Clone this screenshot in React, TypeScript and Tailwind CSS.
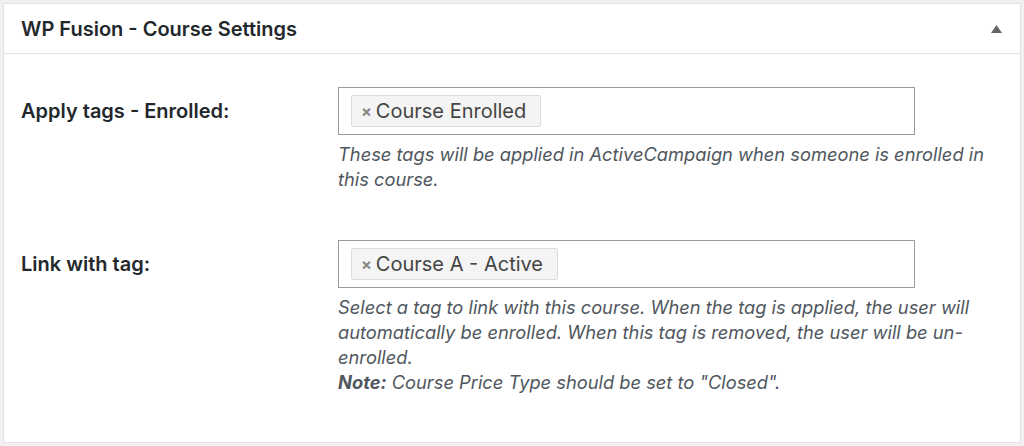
const font = { fontFamily: 'Inter, "Liberation Sans", Arial, sans-serif' };

function TagField({ tag }: { tag: string }) {
  return (
    <div className="flex h-[48px] w-[577px] items-center border border-[#9a9a9a] bg-white px-[12px]">
      <span className="flex h-[32px] items-center gap-[4px] rounded-[2px] border border-[#dcdcdc] bg-[#f4f4f4] pl-[9px] pr-[14px] text-[20px] text-[#444]">
        <span className="text-[16px] font-bold text-[#888]">×</span>
        {tag}
      </span>
    </div>
  );
}

function Row({
  label,
  tag,
  children,
}: {
  label: string;
  tag: string;
  children: React.ReactNode;
}) {
  return (
    <div className="flex">
      <div className="flex h-[48px] w-[317px] shrink-0 items-center text-[20px] font-semibold text-[#23282d]">
        {label}
      </div>
      <div>
        <TagField tag={tag} />
        <p className="mt-[7px] w-[670px] text-[18.3px] italic leading-[24.7px] text-[#50575e]">
          {children}
        </p>
      </div>
    </div>
  );
}

export default function App() {
  return (
    <div className="h-[446px] w-[1024px] bg-[#f1f1f1] p-[3px]" style={font}>
      <div className="h-[440px] border border-[#e2e4e7] bg-white">
        <div className="flex h-[50px] items-center justify-between border-b border-[#e2e4e7] pl-[17px] pr-[18px]">
          <h2 className="text-[20px] font-semibold text-[#23282d]">WP Fusion - Course Settings</h2>
          <svg width="11" height="8" viewBox="0 0 11 8">
            <path d="M5.5 0 L11 8 L0 8 Z" fill="#666" />
          </svg>
        </div>
        <div className="flex flex-col gap-[49px] pl-[17px] pt-[33px]">
          <Row label="Apply tags - Enrolled:" tag="Course Enrolled">
            These tags will be applied in ActiveCampaign when someone is enrolled in
            <br />
            this course.
          </Row>
          <Row label="Link with tag:" tag="Course A - Active">
            Select a tag to link with this course. When the tag is applied, the user will
            <br />
            automatically be enrolled. When this tag is removed, the user will be un-
            <br />
            enrolled.
            <br />
            <b className="font-bold">Note:</b> Course Price Type should be set to "Closed".
          </Row>
        </div>
      </div>
    </div>
  );
}
